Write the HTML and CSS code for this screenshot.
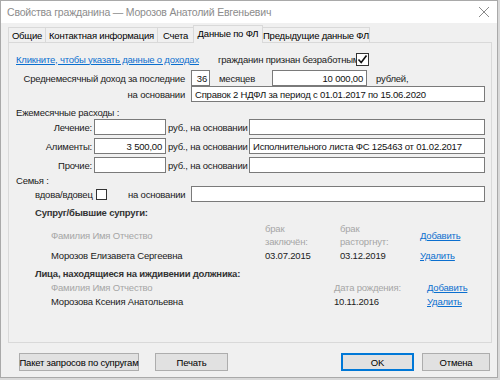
FILE: index.html
```html
<!DOCTYPE html>
<html lang="ru">
<head>
<meta charset="utf-8">
<title>Свойства гражданина</title>
<link rel="stylesheet" href="styles.css">
</head>
<body>
<div class="window">
  <div class="titlebar">
    <span class="title">Свойства гражданина — Морозов Анатолий Евгеньевич</span>
    <svg class="close" width="12" height="12" viewBox="0 0 12 12"><path d="M1 1 L11 11 M11 1 L1 11" stroke="#8a8a8a" stroke-width="1" fill="none"/></svg>
  </div>
  <div class="tabs">
    <div class="tab t1">Общие</div>
    <div class="tab t2">Контактная информация</div>
    <div class="tab t3">Счета</div>
    <div class="tab t4 active">Данные по ФЛ</div>
    <div class="tab t5">Предыдущие данные ФЛ</div>
  </div>
  <div class="panel">
    <div class="row r1">
      <a class="link income-link">Кликните, чтобы указать данные о доходах</a>
      <span class="unemployed">гражданин признан безработным</span>
      <span class="check checked"><svg width="11" height="11" viewBox="0 0 11 11"><path d="M1.5 5.5 L4.2 8.5 L9.5 1.5" stroke="#111" stroke-width="1.6" fill="none"/></svg></span>
    </div>
    <div class="row r2">
      <span class="lbl lbl-main">Среднемесячный доход за последние</span>
      <span class="input in-months">36</span>
      <span class="lbl months">месяцев</span>
      <span class="input in-sum">10 000,00</span>
      <span class="lbl rub">рублей,</span>
    </div>
    <div class="row r3">
      <span class="lbl lbl-main">на основании</span>
      <span class="input in-wide left">Справок 2 НДФЛ за период с 01.01.2017 по 15.06.2020</span>
    </div>
    <div class="row r4">
      <span class="section">Ежемесячные расходы :</span>
    </div>
    <div class="row exp e1">
      <span class="lbl lbl-exp">Лечение:</span>
      <span class="input in-exp"></span>
      <span class="lbl basis">руб., на основании</span>
      <span class="input in-basis"></span>
    </div>
    <div class="row exp e2">
      <span class="lbl lbl-exp">Алименты:</span>
      <span class="input in-exp">3 500,00</span>
      <span class="lbl basis">руб., на основании</span>
      <span class="input in-basis left">Исполнительного листа ФС 125463 от 01.02.2017</span>
    </div>
    <div class="row exp e3">
      <span class="lbl lbl-exp">Прочие:</span>
      <span class="input in-exp"></span>
      <span class="lbl basis">руб., на основании</span>
      <span class="input in-basis"></span>
    </div>
    <div class="row r8">
      <span class="section">Семья :</span>
    </div>
    <div class="row r9">
      <span class="lbl widow">вдова/вдовец</span>
      <span class="check small"></span>
      <span class="lbl widow-basis">на основании</span>
      <span class="input in-wide2"></span>
    </div>
    <div class="row heading h1">Супруг/бывшие супруги:</div>
    <div class="row spouse-head">
      <span class="c-name gray">Фамилия Имя Отчество</span>
      <span class="c-d1 gray two">брак<br>заключён:</span>
      <span class="c-d2 gray two">брак<br>расторгнут:</span>
      <a class="link">Добавить</a>
    </div>
    <div class="row spouse-row">
      <span class="c-name">Морозов Елизавета Сергеевна</span>
      <span class="c-d1 date">03.07.2015</span>
      <span class="c-d2 date">03.12.2019</span>
      <a class="link">Удалить</a>
    </div>
    <div class="row heading h2">Лица, находящиеся на иждивении должника:</div>
    <div class="row dep-head">
      <span class="d-name gray">Фамилия Имя Отчество</span>
      <span class="d-date gray">Дата рождения:</span>
      <a class="link">Добавить</a>
    </div>
    <div class="row dep-row">
      <span class="d-name">Морозова Ксения Анатольевна</span>
      <span class="d-date date">10.11.2016</span>
      <a class="link">Удалить</a>
    </div>
  </div>
  <div class="buttons">
    <span class="btn b-pack">Пакет запросов по супругам</span>
    <span class="btn b-print">Печать</span>
    <span class="spacer"></span>
    <span class="btn b-ok">OK</span>
    <span class="btn b-cancel">Отмена</span>
  </div>
</div>
</body>
</html>
```
FILE: styles.css
```css
* { box-sizing: border-box; }
html, body { margin: 0; padding: 0; }
body {
  width: 500px;
  height: 380px;
  background: #d9d9d9;
  font-family: "Liberation Sans", Arial, sans-serif;
  font-size: 9.5px;
  letter-spacing: -0.2px;
  color: #1a1a1a;
  overflow: hidden;
  white-space: nowrap;
}
.window {
  width: 498px;
  height: 378px;
  border: 1px solid #a9a9a9;
  background: #f0f0f0;
  display: flex;
  flex-direction: column;
}
.titlebar {
  height: 22px;
  background: #ffffff;
  display: flex;
  align-items: center;
  justify-content: space-between;
  padding: 0 7px 0 6px;
}
.title {
  font-size: 10.5px;
  color: #8c8c8c;
  letter-spacing: -0.2px;
}
.close { display: block; }
.tabs {
  display: flex;
  align-items: flex-end;
  height: 17px;
  margin-top: 2px;
  margin-left: 7px;
}
.tab {
  height: 15px;
  border: 1px solid #d9d9d9;
  border-bottom: none;
  background: #f0f0f0;
  display: flex;
  align-items: center;
  justify-content: center;
  color: #000;
  margin-right: -1px;
}
.t1 { width: 38px; }
.t2 { width: 113px; }
.t3 { width: 37px; }
.t4 { width: 70px; }
.t5 { width: 108px; }
.tab.active {
  height: 18px;
  margin-bottom: -1px;
  position: relative;
  z-index: 1;
  background: #f0f0f0;
  padding-bottom: 2px;
}
.panel {
  margin-left: 7px;
  width: 484px;
  height: 301px;
  border: 1px solid #d9d9d9;
  display: flex;
  flex-direction: column;
}
.row {
  display: flex;
  align-items: center;
  flex-shrink: 0;
}
.lbl { display: block; }
.input {
  display: flex;
  align-items: center;
  justify-content: flex-end;
  height: 16px;
  background: #fff;
  border: 1px solid #7a7a7a;
  padding: 0 3px;
  color: #111;
  overflow: hidden;
}
.input.left { justify-content: flex-start; }
.link {
  color: #0b6fcf;
  text-decoration: underline;
}
.r1 { height: 16px; margin-top: 8px; }
.income-link { margin-left: 7px; width: 202px; }
.unemployed { width: 138px; }
.check {
  width: 13px;
  height: 13px;
  border: 1px solid #333;
  background: #fff;
  display: flex;
  align-items: center;
  justify-content: center;
}
.check.small { width: 11px; height: 11px; }
.r2 { height: 16px; margin-top: 3px; }
.lbl-main { width: 176px; text-align: right; }
.in-months { width: 19px; margin-left: 6px; padding: 0 2px; }
.months { margin-left: 9px; width: 53px; }
.in-sum { width: 95px; }
.rub { margin-left: 9px; }
.r3 { height: 16px; margin-top: 0; }
.in-wide { width: 294px; margin-left: 6px; }
.r4 { height: 14px; margin-top: 3px; }
.section { margin-left: 7px; }
.exp { height: 16px; }
.e1 { margin-top: 0; }
.e2, .e3 { margin-top: 3px; }
.lbl-exp { width: 83px; text-align: right; }
.in-exp { width: 72px; margin-left: 2px; }
.basis { width: 81px; margin-left: 2px; }
.in-basis { width: 236px; }
.r8 { height: 12px; margin-top: 1px; }
.r9 { height: 16px; }
.widow { margin-left: 26px; width: 61px; }
.widow-basis { margin-left: 21px; width: 63px; }
.in-wide2 { width: 294px; }
.heading {
  font-weight: bold;
  color: #333;
  margin-left: 26px;
}
.h1 { height: 14px; margin-top: 3px; }
.gray { color: #a6a6a6; }
.two { line-height: 13px; }
.spouse-head { height: 26px; margin-left: 42px; margin-top: 3px; }
.spouse-row { height: 14px; margin-left: 42px; }
.c-name { width: 214px; }
.c-d1 { width: 75px; }
.c-d2 { width: 80px; }
.date { color: #222; }
.h2 { height: 13px; margin-top: 5px; }
.dep-head { height: 14px; margin-left: 42px; }
.dep-row { height: 14px; margin-left: 42px; }
.d-name { width: 283px; }
.d-date { width: 93px; }
.buttons {
  display: flex;
  align-items: center;
  margin-top: 10px;
  padding-left: 18px;
  padding-right: 7px;
}
.btn {
  height: 18px;
  background: #e1e1e1;
  border: 1px solid #adadad;
  display: flex;
  align-items: center;
  justify-content: center;
  color: #000;
}
.b-pack { width: 120px; }
.b-print { width: 73px; margin-left: 16px; }
.spacer { flex: 1; }
.b-ok { width: 73px; border: 1px solid #0078d7; box-shadow: inset 0 0 0 1px #0078d7; }
.b-cancel { width: 68px; margin-left: 8px; }
```
